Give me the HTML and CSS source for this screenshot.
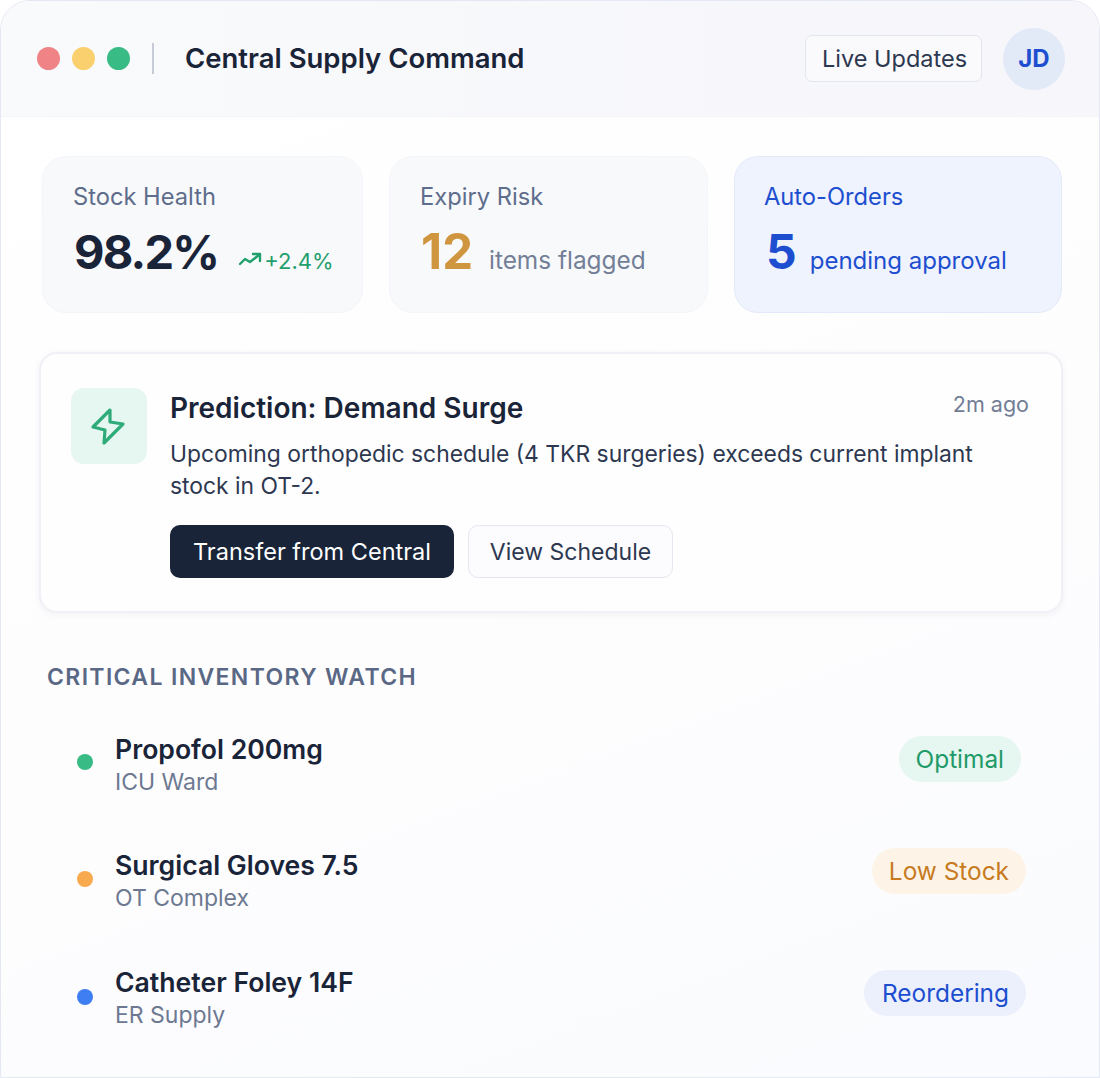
FILE: index.html
```html
<!DOCTYPE html>
<html lang="en">
<head>
    <meta charset="UTF-8">
    <meta name="viewport" content="width=device-width, initial-scale=1.0">
    <title>Central Supply Command</title>
    <link rel="stylesheet" href="styles.css">
</head>
<body>
    <div class="app-window">
        <header class="top-bar">
            <div class="dots">
                <span class="dot dot-red"></span>
                <span class="dot dot-yellow"></span>
                <span class="dot dot-green"></span>
            </div>
            <span class="divider"></span>
            <h1 class="app-title">Central Supply Command</h1>
            <button class="live-btn">Live Updates</button>
            <div class="avatar">JD</div>
        </header>

        <main class="content">
            <section class="stats">
                <div class="stat-card stat-health">
                    <div class="stat-label">Stock Health</div>
                    <div class="stat-row">
                        <span class="stat-value">98.2%</span>
                        <span class="stat-trend"><svg class="trend-icon" viewBox="0 0 24 24" fill="none" stroke="currentColor" stroke-width="2.4" stroke-linecap="round" stroke-linejoin="round">
                                <path d="M2 15L7 10l5 3 9-7"/>
                                <path d="M15 5h7v7"/>
                            </svg>+2.4%</span>
                    </div>
                </div>
                <div class="stat-card stat-expiry">
                    <div class="stat-label">Expiry Risk</div>
                    <div class="stat-row">
                        <span class="stat-value value-amber">12</span>
                        <span class="stat-note">items flagged</span>
                    </div>
                </div>
                <div class="stat-card stat-orders">
                    <div class="stat-label">Auto-Orders</div>
                    <div class="stat-row">
                        <span class="stat-value">5</span>
                        <span class="stat-note">pending approval</span>
                    </div>
                </div>
            </section>

            <section class="alert-card">
                <div class="alert-icon">
                    <svg viewBox="0 0 38 38" fill="none" stroke="currentColor" stroke-width="3.2" stroke-linecap="round" stroke-linejoin="round">
                        <path d="M20 3L3 20l12 3-1 13 19-19-13-2z"/>
                    </svg>
                </div>
                <div class="alert-body">
                    <div class="alert-head">
                        <h2>Prediction: Demand Surge</h2>
                        <span class="alert-time">2m ago</span>
                    </div>
                    <p>Upcoming orthopedic schedule (4 TKR surgeries) exceeds current implant stock in OT-2.</p>
                    <div class="alert-actions">
                        <button class="btn btn-dark">Transfer from Central</button>
                        <button class="btn btn-light">View Schedule</button>
                    </div>
                </div>
            </section>

            <h3 class="section-title">CRITICAL INVENTORY WATCH</h3>
            <ul class="watch-list">
                <li class="watch-item watch-first">
                    <span class="status-dot dot-optimal"></span>
                    <div class="item-info">
                        <div class="item-name">Propofol 200mg</div>
                        <div class="item-place">ICU Ward</div>
                    </div>
                    <span class="pill pill-green">Optimal</span>
                </li>
                <li class="watch-item">
                    <span class="status-dot dot-low"></span>
                    <div class="item-info">
                        <div class="item-name">Surgical Gloves 7.5</div>
                        <div class="item-place">OT Complex</div>
                    </div>
                    <span class="pill pill-orange">Low Stock</span>
                </li>
                <li class="watch-item">
                    <span class="status-dot dot-reorder"></span>
                    <div class="item-info">
                        <div class="item-name">Catheter Foley 14F</div>
                        <div class="item-place">ER Supply</div>
                    </div>
                    <span class="pill pill-blue">Reordering</span>
                </li>
            </ul>
        </main>
    </div>
</body>
</html>
```
FILE: styles.css
```css
* {
    box-sizing: border-box;
}
body {
    margin: 0;
    background-color: #fff;
    font-family: Inter, "Liberation Sans", sans-serif;
    color: #1a2438;
}
.app-window {
    width: 1100px;
    height: 1078px;
    border: 1px solid #e4e8f3;
    border-radius: 30px 30px 0 0;
    background: linear-gradient(160deg, #fff 0%, #fdfdfe 60%, #fafbfe 100%);
    overflow: hidden;
}
.top-bar {
    display: flex;
    align-items: center;
    height: 116px;
    padding: 0 34px 0 36px;
    background: linear-gradient(90deg, #f9fafb 0%, #f6f6fb 100%);
    border-bottom: 1px solid #f3f4f8;
}
.dots {
    display: flex;
    gap: 12px;
}
.dot {
    width: 23px;
    height: 23px;
    border-radius: 50%;
}
.dot-red {
    background-color: #f08385;
}
.dot-yellow {
    background-color: #fad06f;
}
.dot-green {
    background-color: #38bb85;
}
.divider {
    width: 2px;
    height: 31px;
    margin: 0 31px 0 22px;
    background-color: #c6cbd6;
}
.app-title {
    flex-grow: 1;
    margin: 0 0 2px;
    font-size: 27.5px;
    font-weight: 600;
    color: #1a2438;
}
.live-btn {
    width: 177px;
    height: 47px;
    margin-right: 21px;
    padding: 0 0 0 2px;
    border: 1px solid #e2e6ef;
    border-radius: 7px;
    background-color: #fafafc;
    font-family: inherit;
    font-size: 23.5px;
    color: #2d3850;
}
.avatar {
    display: flex;
    align-items: center;
    justify-content: center;
    width: 62px;
    height: 62px;
    border-radius: 50%;
    background-color: #e2e9f7;
    color: #1d4ed0;
    font-size: 24px;
    font-weight: 700;
}
.content {
    padding: 39px 37px 0 39px;
}
.stats {
    display: flex;
    gap: 26px;
    padding-left: 2px;
}
.stat-card {
    height: 157px;
    padding: 26px 30px;
    border: 1px solid #f4f5f9;
    border-radius: 24px;
    background-color: #f8f9fb;
}
.stat-health {
    width: 321px;
}
.stat-expiry {
    width: 319px;
}
.stat-orders {
    width: 328px;
    padding-left: 29px;
    background-color: #eff3fd;
    border-color: #e3e9f9;
    color: #1d4ed0;
}
.stat-label {
    font-size: 23.7px;
    line-height: 28px;
    color: #5f6d8c;
}
.stat-orders .stat-label {
    color: #1d4ed0;
}
.stat-row {
    display: flex;
    align-items: baseline;
    gap: 16px;
    margin-top: 12px;
}
.stat-orders .stat-row {
    gap: 13px;
    padding-left: 2px;
}
.stat-value {
    font-size: 48px;
    line-height: 58px;
    font-weight: 700;
}
.stat-health .stat-value {
    margin-left: 1px;
    font-size: 47px;
    letter-spacing: -1.8px;
}
.stat-expiry .stat-row {
    padding-left: 1px;
}
.value-amber {
    font-size: 49px;
    color: #d0953f;
}
.stat-note {
    font-size: 24.4px;
    color: #737f97;
}
.stat-orders .stat-note {
    font-size: 24px;
    color: #1d4ed0;
}
.stat-trend {
    margin-left: 4px;
    font-size: 22px;
    white-space: nowrap;
    color: #1fa06c;
}
.trend-icon {
    width: 24px;
    height: 24px;
    margin-right: 2px;
    vertical-align: -4px;
}
.alert-card {
    display: flex;
    height: 261px;
    margin: 39px -1px 0;
    padding: 34px 32px 0 30px;
    border: 2px solid #f0f1f6;
    border-radius: 18px;
    background-color: #fefeff;
    box-shadow: 0 2px 8px rgba(30, 40, 80, 0.05);
}
.alert-icon {
    flex-shrink: 0;
    width: 76px;
    height: 76px;
    padding: 19px;
    border-radius: 13px;
    background-color: #e6f6f0;
    color: #2fab7a;
}
.alert-icon svg {
    display: block;
    width: 38px;
    height: 38px;
}
.alert-body {
    flex-grow: 1;
    margin-left: 23px;
}
.alert-head {
    display: flex;
    justify-content: space-between;
    align-items: flex-start;
}
.alert-head h2 {
    margin: 0;
    font-size: 28px;
    line-height: 40px;
    font-weight: 600;
}
.alert-time {
    font-size: 21.5px;
    line-height: 32px;
    color: #717d95;
}
.alert-body p {
    margin: 10px 0 0;
    font-size: 22.86px;
    line-height: 32px;
    color: #2d3850;
}
.alert-actions {
    display: flex;
    gap: 14px;
    margin-top: 23px;
}
.btn {
    height: 53px;
    padding: 0;
    border-radius: 10px;
    font-family: inherit;
}
.btn-dark {
    width: 284px;
    border: none;
    background-color: #192438;
    font-size: 23.5px;
    color: #fff;
}
.btn-light {
    width: 205px;
    border: 1px solid #e4e7f0;
    background-color: #fcfcfe;
    font-size: 23px;
    color: #2d3850;
}
.section-title {
    margin: 49px 0 0 7px;
    font-size: 23px;
    line-height: 30px;
    font-weight: 600;
    letter-spacing: 1.35px;
    color: #5a6885;
}
.watch-list {
    margin: 15px 0 0;
    padding: 0;
    list-style: none;
}
.watch-item {
    display: flex;
    align-items: center;
    height: 116.5px;
    padding: 0 36px 0 37px;
}
.watch-first {
    padding-right: 41px;
}
.status-dot {
    flex-shrink: 0;
    width: 16px;
    height: 16px;
    margin: 0 22px 6px 0;
    border-radius: 50%;
}
.dot-optimal {
    background-color: #38bb85;
}
.dot-low {
    background-color: #f9a94e;
}
.dot-reorder {
    margin-bottom: 2px;
    background-color: #3f7df2;
}
.item-info {
    flex-grow: 1;
}
.item-name {
    font-size: 26.6px;
    line-height: 32px;
    font-weight: 600;
}
.item-place {
    margin-top: 1px;
    font-size: 23px;
    line-height: 32px;
    color: #6d7991;
}
.pill {
    height: 46px;
    margin-bottom: 12px;
    padding: 0 17px;
    line-height: 46px;
    border-radius: 23px;
    font-size: 24.4px;
}
.pill-green {
    background-color: #e6f6f0;
    color: #1f9a69;
}
.pill-orange {
    margin-bottom: 21px;
    background-color: #fdf4e7;
    color: #c77a1e;
}
.pill-blue {
    margin-bottom: 10px;
    padding-left: 18px;
    background-color: #ebf0fc;
    color: #1d4ed0;
}
```
